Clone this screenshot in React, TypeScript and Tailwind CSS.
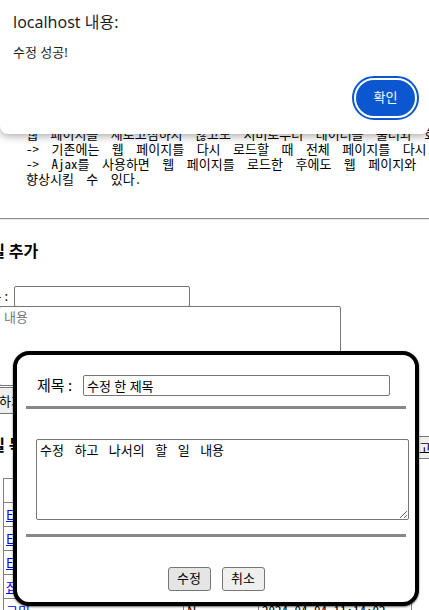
const KR = "font-['Noto_Sans_CJK_KR',sans-serif]";
const MONO = "font-['Noto_Sans_Mono_CJK_KR','Noto_Sans_CJK_KR',monospace]";
const UI = "font-['Noto_Sans','Noto_Sans_CJK_KR',sans-serif]";

const rows = [
  { title: "Electron 공부하기", done: "Y", date: "2024-04-01 10:12:45" },
  { title: "Electron 프로젝트", done: "Y", date: "2024-04-02 14:20:11" },
  { title: "Electron 배포하기", done: "N", date: "2024-04-03 09:05:37" },
  { title: "잡채 만들기", done: "Y", date: "2024-04-03 18:44:02" },
  { title: "고민", done: "N", date: "2024-04-04 11:14:02" },
];

export default function App() {
  return (
    <div className={`relative w-[429px] h-[610px] overflow-hidden bg-white text-black ${KR}`}>
      {/* background page */}
      <div className="flex flex-col">
        <div className={`pt-[96px] pl-[26px] text-[13px] leading-[15px] whitespace-nowrap [word-spacing:6px] ${MONO}`}>
          <div>{"2. Ajax (Asynchronous JavaScript And XML)"}</div>
          <div>{"-> 자바스크립트를 이용해 서버와 비동기 방식으로 데이터를 주고받는 기술"}</div>
          <div>{"웹 페이지를 새로고침하지 않고도 서버로부터 데이터를 불러와 화면을 갱신"}</div>
          <div>{"-> 기존에는 웹 페이지를 다시 로드할 때 전체 페이지를 다시 불러와야 했다."}</div>
          <div>{"-> Ajax를 사용하면 웹 페이지를 로드한 후에도 웹 페이지와 서버가 통신하여"}</div>
          <div>{"향상시킬 수 있다."}</div>
        </div>

        <div className="mt-[32px] border-t border-b border-t-[#8f8f8f] border-b-[#e6e6e6]" />

        <h3 className="mt-[20px] ml-[-28px] text-[16px] leading-[20px] font-bold whitespace-nowrap">할 일 추가</h3>

        <div className="mt-[26px] ml-[-30px] flex items-center h-[20px]">
          <span className="w-[44px] text-right pr-[6px] text-[13px] whitespace-nowrap">제목 :</span>
          <input className="w-[176px] h-[21px] border border-[#767676] rounded-[2px] bg-white" />
        </div>

        <textarea
          className={`block ml-[-1px] w-[342px] h-[80px] border border-[#767676] rounded-[2px] px-[4px] pt-[2px] text-[13px] leading-[16px] placeholder:text-[#757575] ${MONO}`}
          placeholder="내용"
        />

        <button className="self-start mt-[1px] ml-[-32px] h-[27px] px-[6px] text-[13px] whitespace-nowrap bg-[#efefef] border border-[#767676] rounded-[3px]">
          추가하기
        </button>

        <div className="mt-[20px] ml-[-28px] w-[478px] flex items-start justify-between">
          <h3 className="h-[20px] text-[16px] leading-[20px] font-bold whitespace-nowrap">할 일 목록</h3>
          <button className="mt-[2px] h-[23px] px-[6px] text-[13px] whitespace-nowrap bg-[#efefef] border border-[#767676] rounded-[3px]">
            새로고침
          </button>
        </div>

        <table className="mt-[19px] ml-[3px] w-[408px] table-fixed border-collapse text-[13px]">
          <colgroup>
            <col className="w-[180px]" />
            <col className="w-[75px]" />
            <col className="w-[153px]" />
          </colgroup>
          <thead>
            <tr className="h-[24px]">
              <th className="border border-[#808080] font-bold">제목</th>
              <th className="border border-[#808080] font-bold">완료</th>
              <th className="border border-[#808080] font-bold">작성일</th>
            </tr>
          </thead>
          <tbody>
            {rows.map((r) => (
              <tr key={r.title} className="h-[24px]">
                <td className="border border-[#808080] px-[2px] whitespace-nowrap overflow-hidden">
                  <a className="text-[#0000ee] underline" href="#">{r.title}</a>
                </td>
                <td className="border border-[#808080] px-[3px]">{r.done}</td>
                <td className={`border border-[#808080] px-[3px] whitespace-nowrap ${MONO}`}>{r.date}</td>
              </tr>
            ))}
          </tbody>
        </table>
      </div>

      {/* edit modal */}
      <div className="absolute left-[13px] top-[351px] w-[406px] h-[255px] border-4 border-black rounded-[16px] bg-white shadow-[0_1px_2px_rgba(0,0,0,0.6)]">
        <div className="flex flex-col px-[9px]">
          <div className="mt-[20px] flex items-center h-[20px] pl-[11px]">
            <span className="w-[46px] text-[15px] whitespace-nowrap">제목 :</span>
            <input
              className={`w-[307px] h-[21px] border border-[#767676] rounded-[2px] px-[3px] text-[13px] ${UI}`}
              defaultValue="수정 한 제목"
            />
          </div>
          <div className="mt-[11px] h-[3px] bg-[#888888]" />
          <textarea
            className={`block mt-[30px] ml-[10px] w-[373px] h-[81px] border border-[#767676] rounded-[2px] px-[3px] pt-[2px] text-[13px] leading-[16px] [word-spacing:4px] ${MONO}`}
            defaultValue="수정 하고 나서의 할 일 내용"
          />
          <div className="mt-[14px] h-[3px] bg-[#888888]" />
          <div className="mt-[30px] flex justify-center gap-[11px]">
            <button className={`w-[43px] h-[24px] text-[13px] bg-[#e5e5e5] border border-[#767676] rounded-[3px] ${UI}`}>수정</button>
            <button className={`w-[43px] h-[24px] text-[13px] bg-[#efefef] border border-[#767676] rounded-[3px] ${UI}`}>취소</button>
          </div>
        </div>
      </div>

      {/* browser alert */}
      <div className={`absolute top-0 left-0 w-[429px] h-[134px] bg-white rounded-b-[8px] shadow-[0_2px_8px_rgba(0,0,0,0.35)] ${UI}`}>
        <div className="flex flex-col pl-[13px] pt-[12px]">
          <div className="text-[16px] leading-[20px] text-[#1f1f1f]">localhost 내용:</div>
          <div className="mt-[12px] text-[13px] leading-[16px] text-[#1f1f1f]">수정 성공!</div>
          <div className="mt-[16px] flex justify-end pr-[10px]">
            <div className="rounded-full border-2 border-[#0b57d0] p-[2px]">
              <button className="w-[59px] h-[36px] rounded-full bg-[#0b57d0] text-white text-[13px]">확인</button>
            </div>
          </div>
        </div>
      </div>
    </div>
  );
}
